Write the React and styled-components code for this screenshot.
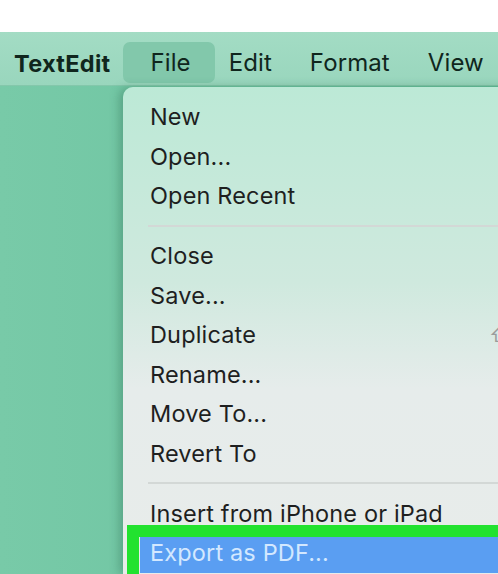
import React from 'react'
import styled, { createGlobalStyle } from 'styled-components'

const GlobalStyle = createGlobalStyle`
    html, body {
        margin: 0;
        padding: 0;
        background: #ffffff;
        overflow: hidden;
    }
    body {
        font-family: "Inter", "Noto Sans", sans-serif;
    }
`

const fileItems = [
    [{ label: 'New' }, { label: 'Open...' }, { label: 'Open Recent' }],
    [
        { label: 'Close' },
        { label: 'Save...' },
        { label: 'Duplicate', shortcut: '⇧⌘S' },
        { label: 'Rename...' },
        { label: 'Move To...' },
        { label: 'Revert To' },
    ],
    [{ label: 'Insert from iPhone or iPad' }, { label: 'Export as PDF...', active: true }],
]

const App = () => {
    return (
        <Screen>
            <GlobalStyle />
            <TopBand />
            <MenuBar>
                <AppName>TextEdit</AppName>
                <BarItem open>File</BarItem>
                <BarItem>Edit</BarItem>
                <BarItem>Format</BarItem>
                <BarItem>View</BarItem>
            </MenuBar>
            <Desktop>
                <Dropdown>
                    {fileItems.map((group, gi) => (
                        <React.Fragment key={gi}>
                            {gi > 0 && <Separator />}
                            {group.map((item) => (
                                <Item key={item.label} active={item.active}>
                                    <span>{item.label}</span>
                                    {item.shortcut && <Shortcut>{item.shortcut}</Shortcut>}
                                    {item.active && <Callout />}
                                </Item>
                            ))}
                        </React.Fragment>
                    ))}
                </Dropdown>
            </Desktop>
        </Screen>
    )
}

//Styled Components

const Screen = styled.div`
    width: 498px;
    height: 574px;
    display: flex;
    flex-direction: column;
    overflow: hidden;
`

const TopBand = styled.div`
    height: 32px;
    background: #ffffff;
    flex-shrink: 0;
`

const MenuBar = styled.div`
    height: 54px;
    flex-shrink: 0;
    display: flex;
    align-items: center;
    padding: 8px 0 0 14px;
    background: linear-gradient(180deg, #a3dcc4 0%, #99d6bd 100%);
    border-bottom: 1px solid #84c7ab;
    box-sizing: border-box;
    white-space: nowrap;
`

const AppName = styled.div`
    font-size: 23.5px;
    font-weight: 700;
    color: #10261d;
    margin-right: 13px;
    letter-spacing: 0.3px;
    margin-top: 2px;
`

const BarItem = styled.div`
    font-size: 24px;
    color: #10261d;
    height: 41px;
    display: flex;
    align-items: center;
    padding: 0 24px 0 27px;
    margin-right: -13px;
    border-radius: 7px;
    background: ${(p) => (p.open ? '#82c8ab' : 'transparent')};
    margin-top: -1px;
    flex-shrink: 0;
    letter-spacing: 0.1px;
`

const Desktop = styled.div`
    flex: 1;
    display: flex;
    background: linear-gradient(90deg, #78caa8 0%, #6dc4a1 60%, #66bf9b 100%);
    padding-left: 123px;
    padding-top: 1px;
    min-height: 0;
`

const Dropdown = styled.div`
    width: 440px;
    flex-shrink: 0;
    background: linear-gradient(180deg, #bce9d6 0%, #cfe9de 40%, #e6eceb 62%, #e8ecea 100%);
    border-radius: 10px 0 0 0;
    box-shadow: -4px 0 10px rgba(40, 100, 75, 0.35);
    padding-top: 10px;
    display: flex;
    flex-direction: column;
`

const Item = styled.div`
    position: relative;
    height: 39.6px;
    flex-shrink: 0;
    display: flex;
    align-items: center;
    padding: 0 20px 0 27px;
    font-size: 23.5px;
    letter-spacing: 0.15px;
    white-space: nowrap;
    color: ${(p) => (p.active ? '#d3e8ff' : '#1e1f1f')};
    background: ${(p) => (p.active ? '#5a9ef2' : 'transparent')};
    margin-left: ${(p) => (p.active ? '17px' : '0')};
    padding-left: ${(p) => (p.active ? '10px' : '27px')};
`

const Shortcut = styled.span`
    margin-left: auto;
    color: #9a9c9c;
    font-size: 20px;
`

const Callout = styled.div`
    position: absolute;
    left: -13px;
    top: -8px;
    width: 480px;
    height: 80px;
    border: 12px solid #22e22f;
    box-sizing: border-box;
    pointer-events: none;
`

const Separator = styled.div`
    height: 20px;
    flex-shrink: 0;
    display: flex;
    align-items: center;
    margin-left: 25px;

    &::after {
        content: '';
        flex: 1;
        height: 2px;
        background: #d3d8d6;
    }
`

export default App
